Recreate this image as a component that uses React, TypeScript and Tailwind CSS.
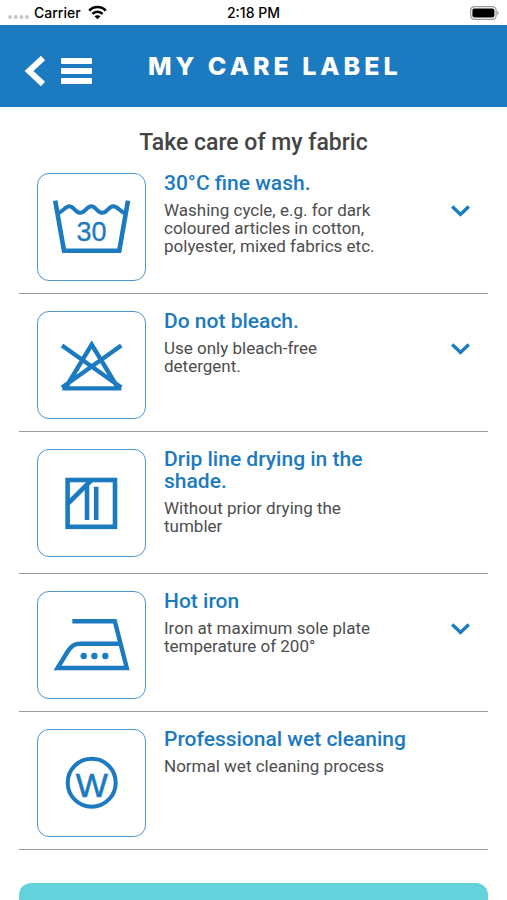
import React, { ReactNode, useState } from "react";

type CareItem = {
  title: string;
  text: string;
  icon: ReactNode;
  expandable: boolean;
};

const WashIcon = () => (
  <>
    <path d="M18.2 27.7 L27 77.7 H82.3 L91 27.7" strokeWidth="4.6" />
    <path
      d="M21 40 C26 39 28 33.3 32.3 33.3 C37 33.3 38.5 39.8 43.3 39.8 C48 39.8 49.5 33.3 54.3 33.3 C59 33.3 60.5 39.8 65.3 39.8 C70 39.8 71.5 33.3 76.3 33.3 C81 33.3 83 39 88 40"
      strokeWidth="4"
    />
    <text
      x="54.5"
      y="68"
      textAnchor="middle"
      fontSize="27"
      fill="currentColor"
      strokeWidth="0.3"
      className="font-['Liberation_Sans',sans-serif]"
    >
      30
    </text>
  </>
);

const BleachIcon = () => (
  <path
    d="M25.3 77.4 H84.3 M28.5 77 L54.7 33.5 L81 77 M25 34.5 L84.3 76.5 M84.3 34.5 L25 76.5"
    strokeWidth="4.4"
  />
);

const DryIcon = () => (
  <>
    <rect x="30.6" y="31" width="47.4" height="46.8" strokeWidth="4.6" />
    <path d="M31 54.5 L54 31.5" strokeWidth="4.6" />
    <path d="M50 35 V71 M59.2 37.7 V71" strokeWidth="4.6" />
  </>
);

const IronIcon = () => (
  <>
    <path
      d="M35.3 30.3 H77.8 L89.8 77 H20.5 L31 60 C34.5 54.5 37.5 52.7 43 52.7 H83"
      strokeWidth="4.4"
    />
    <g fill="currentColor" stroke="none">
      <circle cx="46.7" cy="65" r="3.2" />
      <circle cx="57.4" cy="65" r="3.2" />
      <circle cx="68.3" cy="65" r="3.2" />
    </g>
  </>
);

const WetCleanIcon = () => (
  <>
    <circle cx="54.7" cy="53.7" r="24" strokeWidth="4" />
    <text
      x="54.7"
      y="67.5"
      textAnchor="middle"
      fontSize="34"
      fill="currentColor"
      strokeWidth="0.6"
      className="font-['Liberation_Sans',sans-serif]"
    >
      W
    </text>
  </>
);

const items: CareItem[] = [
  {
    title: "30°C fine wash.",
    text: "Washing cycle, e.g. for dark coloured articles in cotton, polyester, mixed fabrics etc.",
    icon: <WashIcon />,
    expandable: true,
  },
  {
    title: "Do not bleach.",
    text: "Use only bleach-free detergent.",
    icon: <BleachIcon />,
    expandable: true,
  },
  {
    title: "Drip line drying in the shade.",
    text: "Without prior drying the tumbler",
    icon: <DryIcon />,
    expandable: false,
  },
  {
    title: "Hot iron",
    text: "Iron at maximum sole plate temperature of 200°",
    icon: <IronIcon />,
    expandable: true,
  },
  {
    title: "Professional wet cleaning",
    text: "Normal wet cleaning process",
    icon: <WetCleanIcon />,
    expandable: false,
  },
];

function StatusBar() {
  return (
    <div className="grid h-[25px] shrink-0 grid-cols-3 items-center px-2 font-['Inter',sans-serif] text-sm font-medium text-black">
      <div className="flex items-center gap-[5px]">
        <svg width="21" height="12" viewBox="0 0 21 12" fill="#c4c4c4">
          <circle cx="2" cy="10" r="1.9" />
          <circle cx="7.7" cy="10" r="1.9" />
          <circle cx="13.4" cy="10" r="1.9" />
          <circle cx="19" cy="10" r="1.9" />
        </svg>
        <span>Carrier</span>
        <svg className="ml-0.5" width="19" height="15" viewBox="0 0 20 15" fill="none" stroke="#000" strokeWidth="2.8">
          <path d="M1.3 5.6 C6 0.4 14 0.4 18.7 5.6" />
          <path d="M4.7 9 C7.7 5.9 12.3 5.9 15.3 9" />
          <path d="M10 14.6 L6.8 11.4 C8.6 9.9 11.4 9.9 13.2 11.4 Z" fill="#000" stroke="none" />
        </svg>
      </div>
      <span className="text-center">2:18 PM</span>
      <svg className="justify-self-end" width="29" height="14" viewBox="0 0 29 14">
        <rect x="0.7" y="0.7" width="25.4" height="12.6" rx="3.6" fill="none" stroke="#9a9a9a" strokeWidth="1.2" />
        <rect x="2.4" y="2.4" width="22" height="9.2" rx="2" fill="#000" />
        <path d="M27.3 4.8 C29 5.6 29 8.4 27.3 9.2 Z" fill="#9a9a9a" />
      </svg>
    </div>
  );
}

function Header() {
  return (
    <header className="flex h-[82px] shrink-0 items-center bg-[#1c7ac0] pl-6 text-white">
      <button type="button" aria-label="Back" className="mt-2.5">
        <svg width="22" height="32" viewBox="0 0 22 32" fill="none" stroke="currentColor" strokeWidth="6">
          <path d="M19 3 L5 16 L19 29" />
        </svg>
      </button>
      <button type="button" aria-label="Menu" className="mt-2.5 ml-[15px] flex w-[31px] flex-col gap-1">
        <span className="h-[6px] w-full rounded-[1px] bg-white" />
        <span className="h-[6px] w-full rounded-[1px] bg-white" />
        <span className="h-[6px] w-full rounded-[1px] bg-white" />
      </button>
      <h1 className="mt-0.5 ml-14 font-['Inter',sans-serif] text-[25px] font-extrabold tracking-[4px] uppercase">
        My care label
      </h1>
    </header>
  );
}

function CareRow({ item }: { item: CareItem }) {
  const [open, setOpen] = useState(false);

  return (
    <li className="flex border-b border-[#9b9b9b] px-[18px]">
      <div className="mt-[17px] mb-3 h-[108px] w-[109px] shrink-0 rounded-xl border border-[#4a96d0] text-[#1c7ac0]">
        <svg
          className="-m-px"
          width="109"
          height="108"
          viewBox="0 0 109 108"
          fill="none"
          stroke="currentColor"
        >
          {item.icon}
        </svg>
      </div>
      <div className="ml-[18px] flex-1 pt-4 pb-[38px]">
        <h3 className="text-[21px] leading-[22px] font-medium text-[#1c7ac0]">{item.title}</h3>
        <p className="mt-[7px] pr-6 text-[17px] leading-[18px] text-[#4d4d4d]">{item.text}</p>
      </div>
      <div className="flex w-[54px] shrink-0 items-start justify-end pt-[49px]">
        {item.expandable && (
          <button
            type="button"
            aria-label={item.title}
            aria-expanded={open}
            onClick={() => setOpen(!open)}
            className="text-[#1c7ac0]"
          >
            <svg
              className={open ? "rotate-180" : ""}
              width="19"
              height="12"
              viewBox="0 0 19 12"
              fill="none"
              stroke="currentColor"
              strokeWidth="3.4"
            >
              <path d="M1.2 1.5 L9.5 9.4 L17.8 1.5" />
            </svg>
          </button>
        )}
      </div>
    </li>
  );
}

export default function App() {
  return (
    <div className="flex h-screen flex-col overflow-hidden bg-white font-['Roboto',sans-serif]">
      <StatusBar />
      <Header />
      <main className="flex-1 overflow-hidden px-[19px]">
        <h2 className="pt-[23px] text-center text-[23px] leading-[26px] font-medium text-[#444444]">
          Take care of my fabric
        </h2>
        <ul>
          {items.map((item) => (
            <CareRow key={item.title} item={item} />
          ))}
        </ul>
        <button type="button" aria-label="Continue" className="mt-[33px] block h-14 w-full rounded-xl bg-[#64d2da]" />
      </main>
    </div>
  );
}
